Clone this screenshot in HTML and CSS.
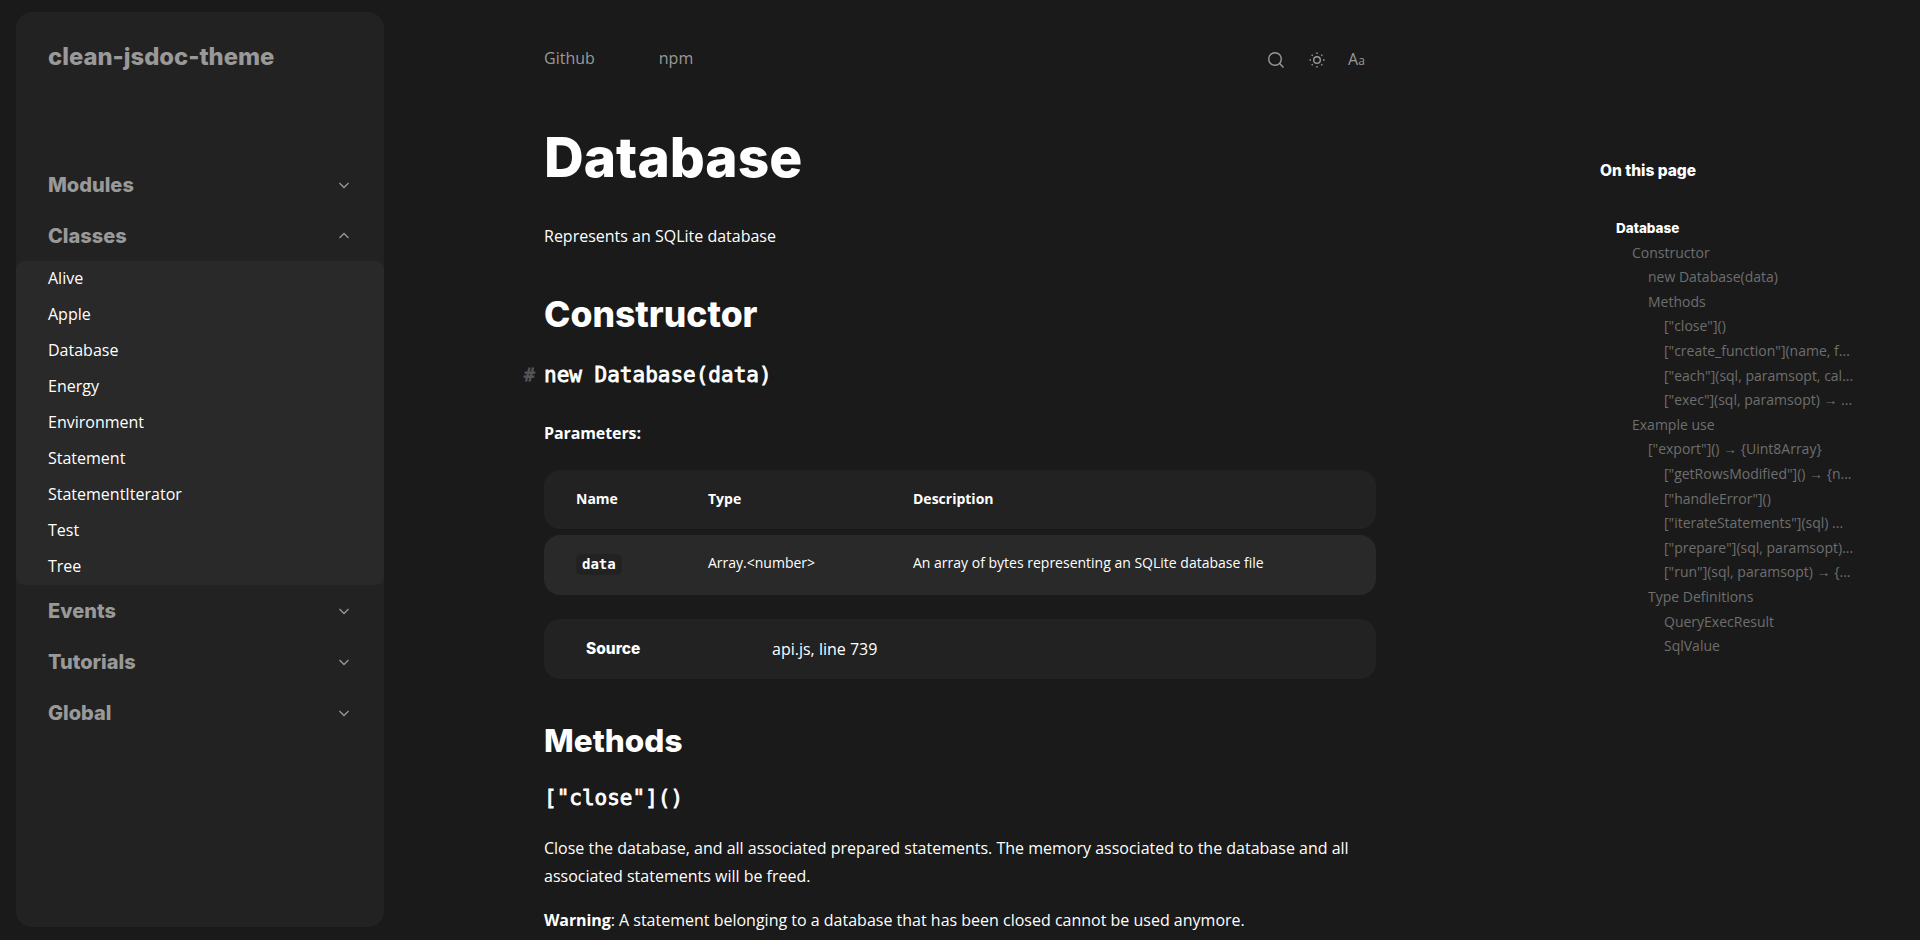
FILE: index.html
```html
<!doctype html>
<html>
<head>
	<meta charset="utf-8" />
	<title>Database</title>
	<link rel="stylesheet" href="styles.css">
</head>
<body>
	<div class="page">
		<nav class="sidebar">
			<div class="brand">clean-jsdoc-theme</div>
			<div class="nav-groups">
				<div class="nav-title">Modules
					<svg class="chev" viewBox="0 0 12 12"><path d="M1.5 4l4.5 4.5L10.5 4"/></svg>
				</div>
				<div class="nav-title">Classes
					<svg class="chev" viewBox="0 0 12 12"><path d="M1.5 8L6 3.500l4.500 4.500"/></svg>
				</div>
				<ul class="nav-list">
					<li>Alive</li>
					<li>Apple</li>
					<li>Database</li>
					<li>Energy</li>
					<li>Environment</li>
					<li>Statement</li>
					<li>StatementIterator</li>
					<li>Test</li>
					<li>Tree</li>
				</ul>
				<div class="nav-title">Events
					<svg class="chev" viewBox="0 0 12 12"><path d="M1.5 4l4.5 4.5L10.5 4"/></svg>
				</div>
				<div class="nav-title">Tutorials
					<svg class="chev" viewBox="0 0 12 12"><path d="M1.5 4l4.5 4.5L10.5 4"/></svg>
				</div>
				<div class="nav-title">Global
					<svg class="chev" viewBox="0 0 12 12"><path d="M1.5 4l4.5 4.5L10.5 4"/></svg>
				</div>
			</div>
		</nav>

		<main class="content">
			<header class="topbar">
				<div class="top-links">
					<a>Github</a>
					<a>npm</a>
				</div>
				<div class="top-icons">
					<svg class="icon" viewBox="0 0 18 18"><circle cx="8" cy="8" r="6.300"/><path d="M12.600 12.600L16.500 16.500"/></svg>
					<svg class="icon" viewBox="0 0 18 18"><circle cx="9" cy="9" r="3.300"/><path d="M9 1.500v1.500M9 15v1.500M1.500 9H3M15 9h1.500M3.700 3.700l1 1M13.300 13.300l1 1M3.700 14.300l1-1M13.300 4.700l1-1"/></svg>
					<span class="aa">A<small>a</small></span>
				</div>
			</header>

			<h1>Database</h1>
			<p class="intro">Represents an SQLite database</p>

			<h2>Constructor</h2>
			<h3 class="sig"><span class="hash">#</span>new Database(data)</h3>
			<p class="params-label">Parameters:</p>

			<div class="table">
				<div class="t-row t-head">
					<div class="c-name">Name</div>
					<div class="c-type">Type</div>
					<div>Description</div>
				</div>
				<div class="t-row t-body">
					<div class="c-name"><code>data</code></div>
					<div class="c-type">Array.&lt;number&gt;</div>
					<div>An array of bytes representing an SQLite database file</div>
				</div>
			</div>

			<div class="source">
				<b>Source</b>
				<span>api.js, line 739</span>
			</div>

			<h2 class="methods">Methods</h2>
			<h3 class="close-sig">["close"]()</h3>
			<p class="desc">Close the database, and all associated prepared statements. The memory associated to the database and all associated statements will be freed.</p>
			<p class="warn"><b>Warning</b>: A statement belonging to a database that has been closed cannot be used anymore.</p>
		</main>

		<aside class="toc">
			<div class="toc-title">On this page</div>
			<ul class="toc-list">
				<li class="lvl0">Database</li>
				<li class="lvl1">Constructor</li>
				<li class="lvl2">new Database(data)</li>
				<li class="lvl2">Methods</li>
				<li class="lvl3">["close"]()</li>
				<li class="lvl3">["create_function"](name, f...</li>
				<li class="lvl3">["each"](sql, paramsopt, cal...</li>
				<li class="lvl3">["exec"](sql, paramsopt) <span class="arrow">→</span> ...</li>
				<li class="lvl1">Example use</li>
				<li class="lvl2">["export"]() <span class="arrow">→</span> {Uint8Array}</li>
				<li class="lvl3">["getRowsModified"]() <span class="arrow">→</span> {n...</li>
				<li class="lvl3">["handleError"]()</li>
				<li class="lvl3">["iterateStatements"](sql) ...</li>
				<li class="lvl3">["prepare"](sql, paramsopt)...</li>
				<li class="lvl3">["run"](sql, paramsopt) <span class="arrow">→</span> {...</li>
				<li class="lvl2">Type Definitions</li>
				<li class="lvl3">QueryExecResult</li>
				<li class="lvl3">SqlValue</li>
			</ul>
		</aside>
	</div>
</body>
</html>
```

FILE: styles.css
```css
html, body { margin: 0; height: 100%; overflow: hidden; }
body { background: #1a1a1a; color: #fff; font: 16px/28px "Open Sans", sans-serif; }
ul { list-style: none; margin: 0; padding: 0; }

.page { display: flex; height: 940px; }

/* sidebar */
.sidebar { flex: none; width: 368px; height: 915px; margin: 12px 0 0 16px; background: #222; border-radius: 16px; }
.brand { padding: 31px 0 0 32px; font: 800 23.800px/28px Inter, sans-serif; color: #999; }
.nav-groups { margin-top: 88px; }
.nav-title { display: flex; justify-content: space-between; align-items: center; height: 51px; padding: 0 32px; font: 800 20px/24px Inter, sans-serif; color: #999; }
.chev { width: 12px; height: 12px; margin-right: 2px; fill: none; stroke: #999; stroke-width: 1.300; }
.nav-list { background: #292929; border-radius: 8px; }
.nav-list li { height: 36px; padding-left: 32px; line-height: 35px; }

/* main column */
.content { flex: none; width: 832px; margin-left: 160px; }
.topbar { display: flex; justify-content: space-between; align-items: center; height: 36px; margin-top: 40px; }
.top-links { display: flex; gap: 64px; color: #999; }
.top-icons { display: flex; align-items: center; gap: 22.500px; margin-right: 10px; padding-top: 3px; }
.icon { width: 18px; height: 18px; fill: none; stroke: #999; stroke-width: 1.400; }
.aa { width: 18px; font: 16px/18px "Open Sans", sans-serif; color: #999; }
.aa small { font-size: 12px; }

h1 { margin: 45px 0 0; font: 800 55px/72px Inter, sans-serif; }
.intro { margin: 29px 0 0; }
h2 { margin: 43px 0 0; font: 800 35.500px/44px Inter, sans-serif; }
h3 { font: 400 21px/32px "DejaVu Sans Mono", monospace; -webkit-text-stroke: .8px #fff; }
.sig { position: relative; margin: 22px 0 0; }
.hash { position: absolute; left: -20px; color: #555; font-size: 18px; -webkit-text-stroke: .8px #555; }
.params-label { margin: 28px 0 0; font-weight: 700; letter-spacing: -.1px; }

.table { margin-top: 23px; font-size: 14px; }
.t-row { display: flex; box-sizing: border-box; border-radius: 16px; padding-left: 32px; }
.t-head { align-items: center; height: 59px; padding-bottom: 2px; background: #222; font-weight: 700; }
.t-body { height: 60px; margin-top: 6px; padding-top: 16px; line-height: 24px; background: #292929; }
.c-name { width: 132px; }
.c-type { width: 205px; }
code { display: block; width: fit-content; margin-top: 3px; padding: 0 6px; background: #222; border-radius: 5px; font: 700 14px/21px "DejaVu Sans Mono", monospace; }

.source { display: flex; align-items: center; height: 60px; margin-top: 24px; padding-left: 42px; background: #222; border-radius: 16px; }
.source b { width: 186px; font: 800 15.500px/24px Inter, sans-serif; }

.methods { margin-top: 40px; font-size: 31.500px; }
.close-sig { margin: 19px 0 0; }
.desc { margin: 20px 0 0; }
.warn { margin: 16px 0 0; }
.warn b { letter-spacing: -.1px; }

/* toc */
.toc { flex: none; width: 272px; margin-left: 224px; padding-top: 157px; }
.toc-title { font: 800 15.500px/28px Inter, sans-serif; }
.toc-list { margin-top: 31px; font-size: 14px; color: #6e6e6e; }
.toc-list li { height: 24.600px; line-height: 24.600px; white-space: nowrap; }
.toc-list .lvl0 { padding-left: 16px; color: #fff; font: 800 13.500px/24.600px Inter, sans-serif; }
.lvl1 { padding-left: 32px; }
.lvl2 { padding-left: 48px; }
.lvl3 { padding-left: 64px; }
.arrow { font-family: "Liberation Sans", sans-serif; }
```
